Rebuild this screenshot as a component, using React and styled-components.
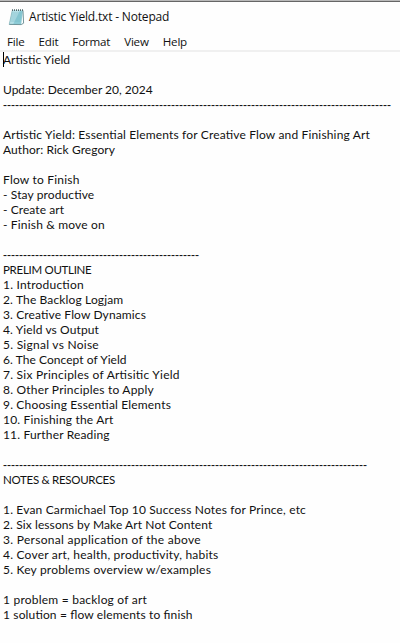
import styled, { createGlobalStyle } from "styled-components";

const menus = ["File", "Edit", "Format", "View", "Help"];

// track: letter spacing of the line in px
const lines = [
  { text: "Artistic Yield" },
  { text: "" },
  { text: "Update: December 20, 2024" },
  { rule: 97 },
  { text: "" },
  { text: "Artistic Yield: Essential Elements for Creative Flow and Finishing Art", track: 0.16 },
  { text: "Author: Rick Gregory", track: 0.06 },
  { text: "" },
  { text: "Flow to Finish", track: 0.2 },
  { text: "- Stay productive", track: 0.12 },
  { text: "- Create art", track: 0.08 },
  { text: "- Finish & move on", track: 0.17 },
  { text: "" },
  { rule: 49 },
  { text: "PRELIM OUTLINE", caps: true },
  { text: "1. Introduction", track: 0.2 },
  { text: "2. The Backlog Logjam", track: 0.14 },
  { text: "3. Creative Flow Dynamics", track: 0.12 },
  { text: "4. Yield vs Output", track: 0.11 },
  { text: "5. Signal vs Noise", track: 0.26 },
  { text: "6. The Concept of Yield", track: 0.05 },
  { text: "7. Six Principles of Artisitic Yield", track: 0.25 },
  { text: "8. Other Principles to Apply", track: 0.21 },
  { text: "9. Choosing Essential Elements", track: 0.17 },
  { text: "10. Finishing the Art", track: 0.19 },
  { text: "11. Further Reading", track: 0.16 },
  { text: "" },
  { rule: 91 },
  { text: "NOTES & RESOURCES", caps: true },
  { text: "" },
  { text: "1. Evan Carmichael Top 10 Success Notes for Prince, etc", track: 0.17 },
  { text: "2. Six lessons by Make Art Not Content", track: 0.1 },
  { text: "3. Personal application of the above", track: 0.3 },
  { text: "4. Cover art, health, productivity, habits", track: 0.21 },
  { text: "5. Key problems overview w/examples", track: 0.2 },
  { text: "" },
  { text: "1 problem = backlog of art", track: 0.22 },
  { text: "1 solution = flow elements to finish", track: 0.14 },
];

const NotepadIcon = () => (
  <svg width="17" height="18" viewBox="0 0 17 18">
    <path d="M4.2 2.5H15L13.2 16.4H1.2Z" fill="#8ccbd6" />
    <path d="M4.2 2.5H12L5 16.4H1.2Z" fill="#b5e0e7" />
    <path d="M15 2.5L15.6 15.2L13.2 16.6L1.2 16.4" fill="none" stroke="#668b91" strokeWidth="0.9" />
    <path d="M4 5H13.6M3.6 7H13.3M3.2 9H13M2.8 11H12.7M2.4 13H12.4" stroke="#6db2bf" strokeWidth="0.5" />
    <path d="M4.2 2.5L1.2 16.4" stroke="#82aeb4" strokeWidth="0.6" />
    <path d="M4 2.2H15" stroke="#536b6e" strokeWidth="1.8" strokeDasharray="1 1" />
  </svg>
);

const App = () => {
  return (
    <>
      <GlobalStyle />
      <Window>
        <TitleBar>
          <NotepadIcon />
          <Title>Artistic Yield.txt - Notepad</Title>
        </TitleBar>
        <MenuBar>
          {menus.map((menu) => (
            <MenuItem key={menu}>{menu}</MenuItem>
          ))}
        </MenuBar>
        <Editor>
          <Caret />
          {lines.map((line, i) =>
            line.rule ? (
              <Rule key={i}>{"-".repeat(line.rule)}</Rule>
            ) : line.caps ? (
              <Heading key={i}>{line.text}</Heading>
            ) : (
              <Line key={i} $track={line.track}>
                {line.text}
              </Line>
            )
          )}
        </Editor>
      </Window>
    </>
  );
};

const GlobalStyle = createGlobalStyle`
  * {
    box-sizing: border-box;
  }
  body {
    margin: 0;
    background: #fefefe;
  }
`;

const Window = styled.div`
  height: 643px;
  overflow: hidden;
  border-top: 1px solid #b9b9b9;
  background: #fefefe;
  color: #111;
`;

const TitleBar = styled.div`
  display: flex;
  align-items: center;
  height: 30px;
  padding-left: 8px;
  border-top: 1px solid #666;
`;

const Title = styled.div`
  margin-left: 4px;
  font: 12px/16px "Open Sans", sans-serif;
  letter-spacing: -0.18px;
  white-space: pre;
`;

const MenuBar = styled.div`
  display: flex;
  align-items: center;
  gap: 14px;
  height: 21px;
  padding: 2px 0 0 7px;
  border-bottom: 2px solid #f0f0f0;
`;

const MenuItem = styled.div`
  font: 11.6px/16px "Open Sans", sans-serif;
  letter-spacing: -0.2px;
`;

const Editor = styled.div`
  position: relative;
  padding-left: 3px;
  font: 12px/15px Lato, sans-serif;
  font-feature-settings: "liga" 1;
`;

const Caret = styled.div`
  position: absolute;
  top: 0;
  left: 3px;
  width: 1px;
  height: 15px;
  background: #000;
`;

const Line = styled.div`
  height: 15px;
  white-space: pre;
  letter-spacing: ${({ $track }) => $track || 0}px;
`;

const Heading = styled(Line)`
  font-size: 11.5px;
  letter-spacing: -0.29px;
`;

const Rule = styled.div`
  height: 15px;
  padding-top: 1px;
  white-space: pre;
  font-family: "Liberation Sans", sans-serif;
  letter-spacing: 0.004px;
`;

export default App;
